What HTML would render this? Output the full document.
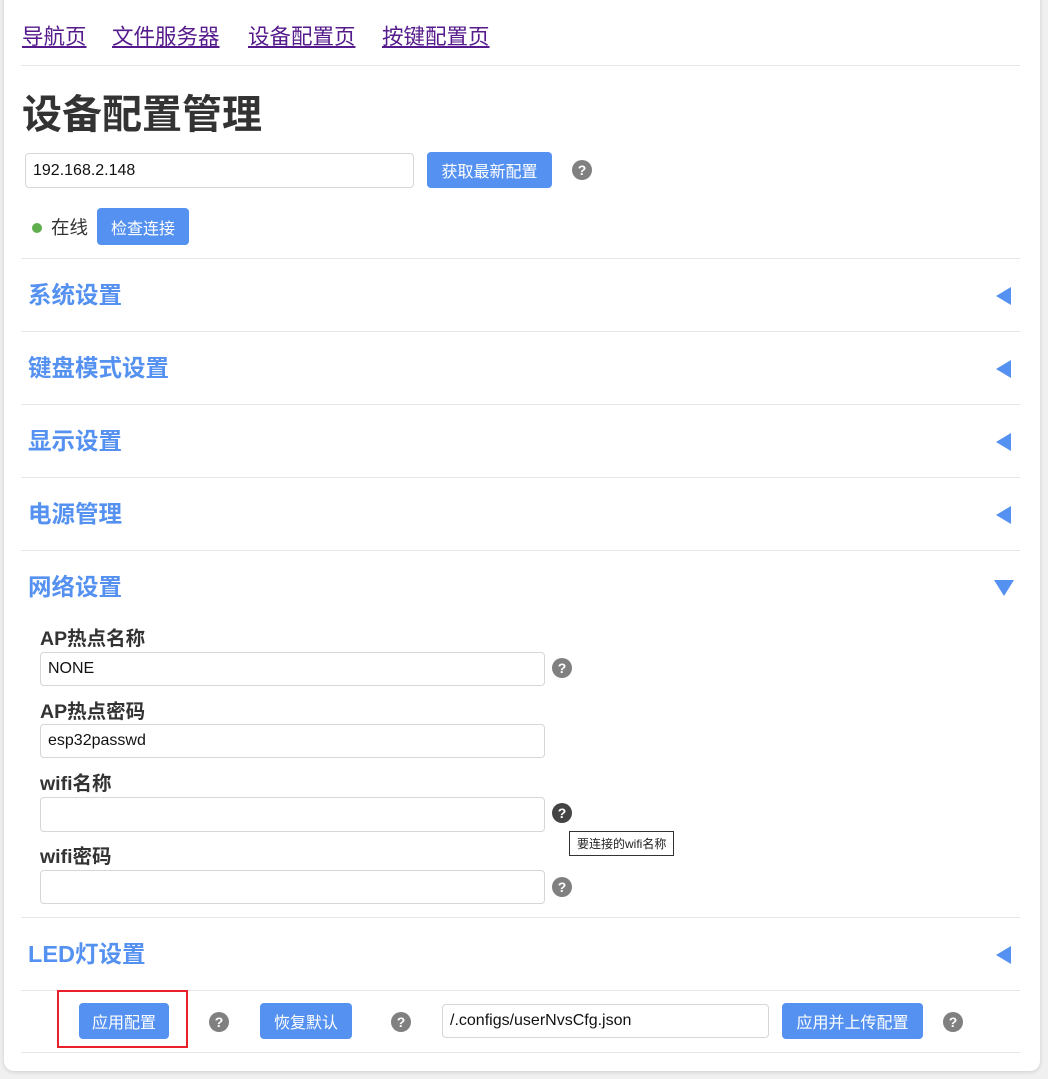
<!DOCTYPE html>
<html><head><meta charset="utf-8"><style>
body{margin:0;background:#f0f0f0;width:1048px;height:1079px;position:relative;overflow:hidden;font-family:"Liberation Sans","Noto Sans CJK SC",sans-serif;color:#333}
.card{position:absolute;left:4px;top:-10px;width:1036px;height:1081px;background:#fff;border-radius:10px;box-shadow:0 1px 4px rgba(0,0,0,.15)}
.a{position:absolute}
.nav a{position:absolute;top:20px;font-size:21.5px;color:#551a8b;text-decoration:underline}
.hr{position:absolute;left:21px;width:999px;height:1px;background:#e6e6e6}
.in{position:absolute;border:1px solid #d6d6d6;border-radius:4px;box-sizing:border-box;font-size:16px;padding:0 7px;display:flex;align-items:center;background:#fff;color:#111}
.btn{position:absolute;background:#5591f0;color:#fff;border-radius:4px;font-size:16px;display:flex;align-items:center;justify-content:center}
.q{position:absolute;width:20px;height:20px;border-radius:50%;background:#808080;color:#fff;font-size:14px;font-weight:bold;display:flex;align-items:center;justify-content:center}
.sec{position:absolute;left:28px;font-size:23.5px;font-weight:bold;color:#5591f0;line-height:30px}
.tri{position:absolute;left:996px;width:0;height:0;border-top:9px solid transparent;border-bottom:9px solid transparent;border-right:15px solid #5591f0}
.lab{position:absolute;left:40px;font-size:19.5px;font-weight:bold;color:#333}
</style></head><body>
<div class="card"></div>
<div class="nav"><a style="left:22px">导航页</a><a style="left:112px">文件服务器</a><a style="left:248px">设备配置页</a><a style="left:382px">按键配置页</a></div>
<div class="hr" style="top:65px"></div>
<div class="a" style="left:22px;top:82px;font-size:40px;font-weight:bold;color:#333">设备配置管理</div>
<div class="in" style="left:25px;top:153px;width:389px;height:35px">192.168.2.148</div>
<div class="btn" style="left:427px;top:152px;width:125px;height:36px">获取最新配置</div>
<div class="q" style="left:572px;top:160px">?</div>
<div class="a" style="left:32px;top:223px;width:10px;height:10px;border-radius:50%;background:#5fae4e"></div>
<div class="a" style="left:51px;top:214px;font-size:18.5px">在线</div>
<div class="btn" style="left:97px;top:208px;width:92px;height:37px">检查连接</div>
<div class="hr" style="top:258px"></div>
<div class="sec" style="top:280px">系统设置</div><div class="tri" style="top:287px"></div>
<div class="hr" style="top:331px"></div>
<div class="sec" style="top:353px">键盘模式设置</div><div class="tri" style="top:360px"></div>
<div class="hr" style="top:404px"></div>
<div class="sec" style="top:426px">显示设置</div><div class="tri" style="top:433px"></div>
<div class="hr" style="top:477px"></div>
<div class="sec" style="top:499px">电源管理</div><div class="tri" style="top:506px"></div>
<div class="hr" style="top:550px"></div>
<div class="sec" style="top:572px">网络设置</div>
<div class="a" style="left:994px;top:580px;border-left:10px solid transparent;border-right:10px solid transparent;border-top:16px solid #5591f0"></div>
<div class="lab" style="top:622px">AP热点名称</div>
<div class="in" style="left:40px;top:652px;width:505px;height:34px">NONE</div>
<div class="q" style="left:552px;top:658px">?</div>
<div class="lab" style="top:695px">AP热点密码</div>
<div class="in" style="left:40px;top:724px;width:505px;height:34px">esp32passwd</div>
<div class="lab" style="top:767px">wifi名称</div>
<div class="in" style="left:40px;top:797px;width:505px;height:35px"></div>
<div class="q" style="left:552px;top:803px;background:#444">?</div>
<div class="a" style="left:569px;top:831px;border:1px solid #333;background:#fff;font-size:12px;padding:3px 7px;color:#222">要连接的wifi名称</div>
<div class="lab" style="top:840px">wifi密码</div>
<div class="in" style="left:40px;top:870px;width:505px;height:34px"></div>
<div class="q" style="left:552px;top:877px">?</div>
<div class="hr" style="top:917px"></div>
<div class="sec" style="top:939px">LED灯设置</div><div class="tri" style="top:946px"></div>
<div class="hr" style="top:990px"></div>
<div class="a" style="left:57px;top:990px;width:127px;height:54px;border:2px solid #e8202a"></div>
<div class="btn" style="left:79px;top:1003px;width:90px;height:36px">应用配置</div>
<div class="q" style="left:209px;top:1012px">?</div>
<div class="btn" style="left:260px;top:1003px;width:92px;height:36px">恢复默认</div>
<div class="q" style="left:391px;top:1012px">?</div>
<div class="in" style="left:442px;top:1004px;width:327px;height:34px">/.configs/userNvsCfg.json</div>
<div class="btn" style="left:782px;top:1003px;width:141px;height:36px">应用并上传配置</div>
<div class="q" style="left:943px;top:1012px">?</div>
<div class="hr" style="top:1052px"></div>
</body></html>
